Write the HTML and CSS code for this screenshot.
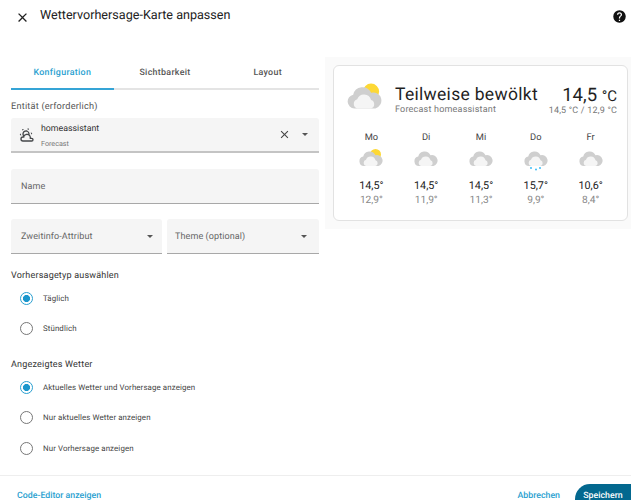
FILE: index.html
```html
<!DOCTYPE html>
<html lang="de">
<head>
<meta charset="utf-8">
<title>Wettervorhersage-Karte anpassen</title>
<link rel="stylesheet" href="styles.css">
</head>
<body>
<svg class="defs" width="0" height="0" aria-hidden="true">
  <defs>
    <symbol id="pc" viewBox="0 0 48 38">
      <circle cx="33" cy="13" r="11" fill="#fdd835"/>
      <path d="M10 36a9.500 9.500 0 0 1-1.500-18.800A13 13 0 0 1 33 14.500a10.800 10.800 0 0 1 6 21.500z" fill="#cfcfcf"/>
      <path d="M14 36a6.500 6.500 0 0 1 0-12.500a10 10 0 0 1 19 1a6 6 0 0 1 0 11.500z" fill="#f5f5f5"/>
    </symbol>
    <symbol id="cl" viewBox="0 0 48 38">
      <path d="M10 36a9.500 9.500 0 0 1-1.500-18.800A13 13 0 0 1 33 14.500a10.800 10.800 0 0 1 6 21.500z" fill="#cfcfcf"/>
      <path d="M14 36a6.500 6.500 0 0 1 0-12.500a10 10 0 0 1 19 1a6 6 0 0 1 0 11.500z" fill="#f5f5f5"/>
    </symbol>
  </defs>
</svg>
<div class="page">
  <header class="top">
    <svg class="close" viewBox="0 0 24 24"><path d="M19 6.410 17.590 5 12 10.590 6.410 5 5 6.410 10.590 12 5 17.590 6.410 19 12 13.410 17.590 19 19 17.590 13.410 12z"/></svg>
    <h1 class="title">Wettervorhersage-Karte anpassen</h1>
    <svg class="help" viewBox="0 0 24 24"><path d="M15.070 11.250l-.9.920C13.450 12.900 13 13.500 13 15h-2v-.5c0-1.100.45-2.100 1.170-2.830l1.240-1.260c.37-.36.590-.86.590-1.410a2 2 0 0 0-2-2 2 2 0 0 0-2 2H8a4 4 0 0 1 4-4 4 4 0 0 1 4 4c0 .88-.36 1.680-.93 2.250M13 19h-2v-2h2M12 2A10 10 0 0 0 2 12a10 10 0 0 0 10 10 10 10 0 0 0 10-10c0-5.530-4.500-10-10-10z"/></svg>
  </header>
  <main class="content">
    <section class="editor">
      <nav class="tabs">
        <div class="tab active">Konfiguration</div>
        <div class="tab">Sichtbarkeit</div>
        <div class="tab">Layout</div>
      </nav>
      <div class="entity-label">Entität (erforderlich)</div>
      <div class="field entity">
        <svg class="entity-icon" viewBox="0 0 24 24"><path d="M12.740,5.470C15.100,6.500 16.350,9.030 15.920,11.460C17.190,12.560 18,14.190 18,16V16.170C18.310,16.060 18.650,16 19,16A3,3 0 0,1 22,19A3,3 0 0,1 19,22H6A4,4 0 0,1 2,18A4,4 0 0,1 6,14H6.270C5,12.450 4.600,10.240 5.500,8.260C6.720,5.500 9.970,4.240 12.740,5.470M11.930,7.300C10.160,6.500 8.090,7.310 7.310,9.070C6.850,10.090 6.930,11.220 7.410,12.130C8.500,10.830 10.160,10 12,10C12.700,10 13.380,10.120 14,10.340C13.940,9.060 13.180,7.860 11.930,7.300M13.550,3.640C13,3.400 12.450,3.230 11.880,3.120L14.370,1.820L15.270,4.710C14.760,4.290 14.190,3.930 13.550,3.640M6.090,4.440C5.600,4.790 5.170,5.190 4.800,5.630L4.910,2.820L7.870,3.500C7.250,3.710 6.650,4.030 6.090,4.440M18,9.710C17.910,9.120 17.780,8.550 17.590,8L19.970,9.500L17.920,11.730C18.030,11.080 18.050,10.400 18,9.710M3.040,11.300C3.110,11.900 3.240,12.470 3.430,13L1.060,11.500L3.100,9.280C3,9.930 2.970,10.610 3.040,11.300M19,18H16V16A4,4 0 0,0 12,12A4,4 0 0,0 8,16H6A2,2 0 0,0 4,18A2,2 0 0,0 6,20H19A1,1 0 0,0 20,19A1,1 0 0,0 19,18Z"/></svg>
        <div class="entity-text">
          <div class="entity-name">homeassistant</div>
          <div class="entity-sub">Forecast</div>
        </div>
        <svg class="clear" viewBox="0 0 24 24"><path d="M19 6.410 17.590 5 12 10.590 6.410 5 5 6.410 10.590 12 5 17.590 6.410 19 12 13.410 17.590 19 19 17.590 13.410 12z"/></svg>
        <span class="caret small"></span>
      </div>
      <div class="field name"><span class="placeholder">Name</span></div>
      <div class="select-row">
        <div class="field select first"><span class="placeholder">Zweitinfo-Attribut</span><span class="caret"></span></div>
        <div class="field select second"><span class="placeholder">Theme (optional)</span><span class="caret"></span></div>
      </div>
      <div class="group-label">Vorhersagetyp auswählen</div>
      <div class="radio on"><span class="dot"></span><span>Täglich</span></div>
      <div class="radio"><span class="dot"></span><span>Stündlich</span></div>
      <div class="group-label second-group">Angezeigtes Wetter</div>
      <div class="radio on"><span class="dot"></span><span>Aktuelles Wetter und Vorhersage anzeigen</span></div>
      <div class="radio"><span class="dot"></span><span>Nur aktuelles Wetter anzeigen</span></div>
      <div class="radio"><span class="dot"></span><span>Nur Vorhersage anzeigen</span></div>
    </section>
    <aside class="preview">
      <div class="card">
        <div class="current">
          <svg class="big-icon"><use href="#pc"/></svg>
          <div class="current-main">
            <div class="state">Teilweise bewölkt</div>
            <div class="sub">Forecast homeassistant</div>
          </div>
          <div class="current-temp">
            <div class="temp">14,5 <span class="unit">°C</span></div>
            <div class="sub">14,5 °C / 12,9 °C</div>
          </div>
        </div>
        <div class="forecast">
          <div class="day"><div class="dn">Mo</div><svg class="day-icon"><use href="#pc"/></svg><div class="hi">14,5°</div><div class="lo">12,9°</div></div>
          <div class="day"><div class="dn">Di</div><svg class="day-icon"><use href="#cl"/></svg><div class="hi">14,5°</div><div class="lo">11,9°</div></div>
          <div class="day"><div class="dn">Mi</div><svg class="day-icon"><use href="#cl"/></svg><div class="hi">14,5°</div><div class="lo">11,3°</div></div>
          <div class="day"><div class="dn">Do</div>
            <svg class="day-icon" viewBox="0 0 24 19"><use href="#cl" width="24" height="19"/><circle cx="7" cy="20" r=".9" fill="#29b6f6"/><circle cx="12" cy="21.500" r=".9" fill="#29b6f6"/><circle cx="16" cy="20" r=".9" fill="#29b6f6"/></svg>
            <div class="hi">15,7°</div><div class="lo">9,9°</div></div>
          <div class="day"><div class="dn">Fr</div><svg class="day-icon"><use href="#cl"/></svg><div class="hi">10,6°</div><div class="lo">8,4°</div></div>
        </div>
      </div>
    </aside>
  </main>
  <footer class="foot">
    <span class="link code">Code-Editor anzeigen</span>
    <span class="link cancel">Abbrechen</span>
    <span class="save">Speichern</span>
  </footer>
</div>
</body>
</html>
```
FILE: styles.css
```css
* { box-sizing: border-box; }
html, body { margin: 0; height: 100%; overflow: hidden; background: #fff; }
body { font-family: Roboto, "Liberation Sans", sans-serif; color: #212121; text-rendering: geometricPrecision; }
.defs { display: block; height: 0; }
.page { width: 631px; height: 500px; overflow: hidden; display: flex; flex-direction: column; }

.top { display: flex; align-items: center; height: 34px; flex: none; padding: 0 4px 2px 15px; }
.close { width: 15px; height: 15px; fill: #212121; margin-top: 2px; }
.title { margin: 0 0 0 10px; flex: 1; font-size: 12.600px; font-weight: 400; line-height: 30px; }
.help { width: 15px; height: 15px; fill: #111; margin-top: 1px; }

.content { flex: none; height: 441px; display: flex; align-items: flex-start; padding: 23px 0 0 11px; }
.editor { width: 308px; flex: none; }

.tabs { display: flex; height: 33px; border-bottom: 2px solid #e4e4e4; }
.tab { flex: 1; text-align: center; font-size: 8.900px; font-weight: 500; letter-spacing: .3px; line-height: 32px; color: #555; margin-bottom: -2px; }
.tab.active { color: #2a9fd0; border-bottom: 2px solid #35a4d6; }

.entity-label { font-size: 9.200px; color: #555; margin-top: 10px; line-height: 14px; letter-spacing: .2px; }

.field { background: #f5f5f5; border-bottom: 1px solid #a8a8a8; border-radius: 3px 3px 0 0; display: flex; align-items: center; height: 35px; }
.entity { margin-top: 4px; padding: 0 8px; border-bottom-width: 2px; border-bottom-color: #c4c4c4; }
.entity-icon { width: 16px; height: 16px; flex: none; fill: #44474a; }
.entity-text { flex: 1; margin-left: 6px; padding-top: 3px; }
.entity-name { font-size: 8.800px; line-height: 13px; color: #333; }
.entity-sub { font-size: 7.200px; line-height: 12px; color: #777; margin-top: 2px; }
.clear { width: 13px; height: 13px; fill: #444; margin-right: 11px; }

.caret { width: 0; height: 0; border-left: 3.500px solid transparent; border-right: 3.500px solid transparent; border-top: 3.500px solid #555; flex: none; }
.caret.small { border-left-width: 3px; border-right-width: 3px; border-top-width: 3px; margin-right: 3px; }

.placeholder { flex: 1; font-size: 9px; color: #666; letter-spacing: .1px; padding-top: 1px; }
.name { margin-top: 16px; padding: 0 10px; }
.select-row { display: flex; gap: 5px; margin-top: 15px; }
.select { flex: 1; padding: 0 10px; }
.select.second { padding-left: 8px; padding-right: 12px; }
.select.first { padding-right: 9px; }

.group-label { font-size: 9px; line-height: 14px; color: #333; margin-top: 15px; letter-spacing: .2px; }
.second-group { margin-top: 14px; }
.radio { display: flex; align-items: center; height: 30.500px; padding-left: 9px; font-size: 7.900px; color: #444; letter-spacing: .1px; }
.dot { width: 13px; height: 13px; border-radius: 50%; border: 1.200px solid #777; margin-right: 10px; flex: none; }
.radio.on .dot { border-color: #2a9fd0; background: radial-gradient(circle, #1b96cc 0 3.300px, transparent 3.800px); }

.preview { flex: 1; margin-left: 6px; height: 172px; background: #fafafa; padding: 8px 3px 8px 8px; }
.card { height: 156px; background: #fff; border: 1px solid #e2e2e2; border-radius: 6px; padding: 15px 10px 0 13px; }
.current { display: flex; align-items: flex-start; height: 44px; }
.big-icon { width: 35px; height: 28px; flex: none; margin-top: 1px; }
.current-main { flex: 1; margin-left: 13px; }
.state { font-size: 17.500px; line-height: 20px; color: #1f1f1f; letter-spacing: .3px; margin-top: 4px; }
.sub { font-size: 9px; line-height: 11px; color: #777; letter-spacing: .2px; }
.current-temp { text-align: right; }
.temp { font-size: 18.500px; line-height: 20px; margin-top: 4px; color: #1f1f1f; }
.unit { font-size: 15px; }

.forecast { display: flex; margin: 7px -1px 0 -3px; }
.day { flex: 1; display: flex; flex-direction: column; align-items: center; }
.dn { font-size: 9.300px; line-height: 12px; color: #444; }
.day-icon { width: 24px; height: 19px; margin-top: 4px; overflow: visible; }
.hi { font-size: 10.800px; line-height: 14px; margin-top: 12px; color: #222; }
.lo { font-size: 10.200px; line-height: 14px; margin-top: 1px; color: #888; }

.foot { flex: none; border-top: 1px solid #eee; display: flex; align-items: flex-start; height: 40px; padding: 8px 0 0 17px; }
.link { font-size: 8.800px; font-weight: 500; color: #2a9fd0; line-height: 24px; }
.code { flex: 1; }
.cancel { margin-right: 15px; }
.save { width: 56px; height: 30px; border-radius: 15px 0 0 15px; background: #03688f; color: #fff; font-size: 8.800px; font-weight: 500; line-height: 24px; text-align: center; }
```
